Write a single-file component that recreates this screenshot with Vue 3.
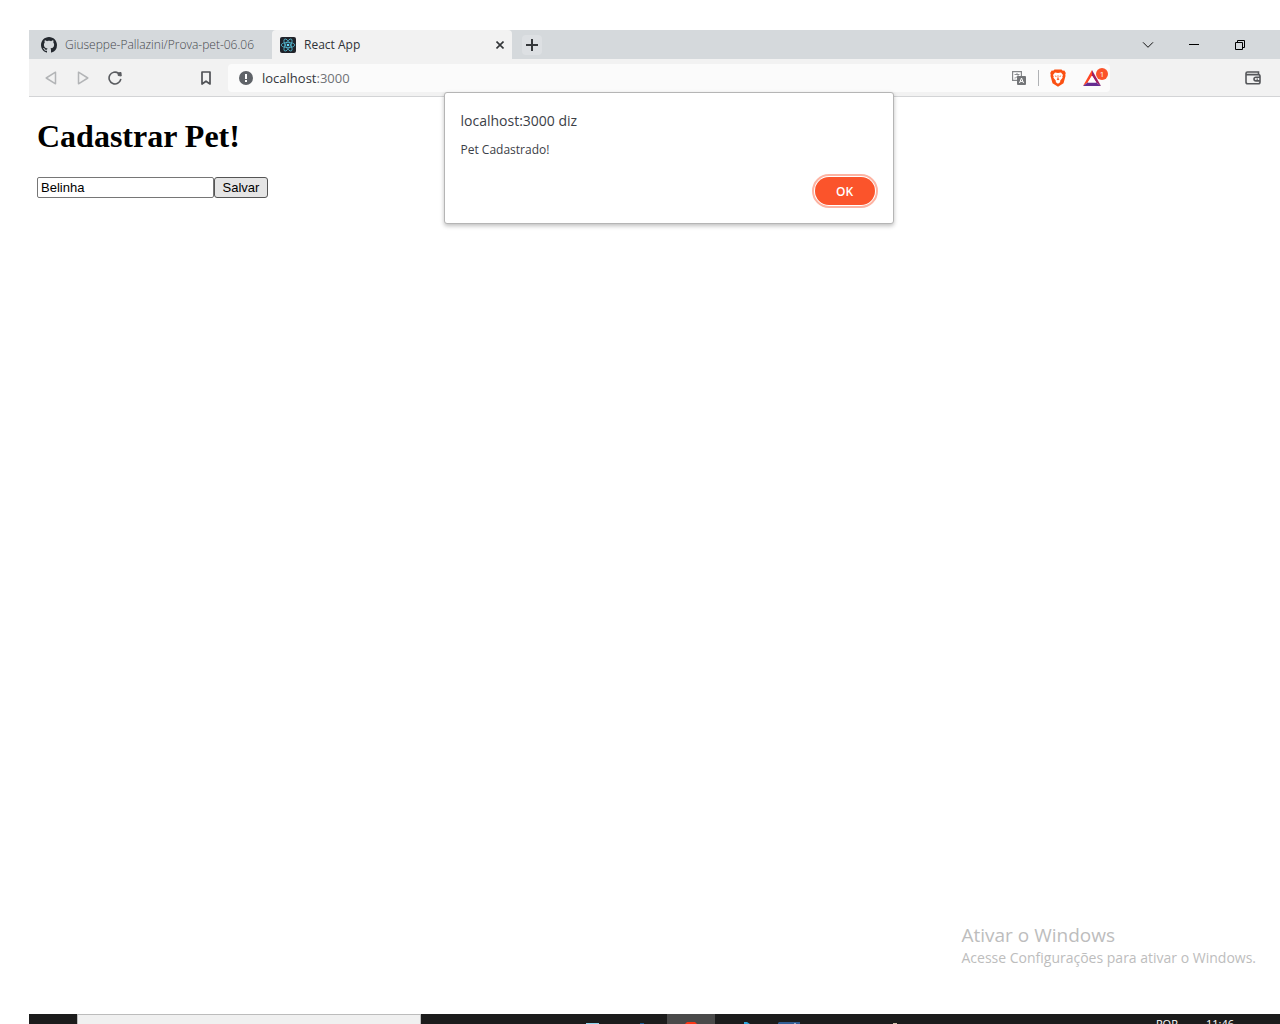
<script setup>
import { ref } from 'vue'

const petName = ref('Belinha')
const address = ref('localhost:3000')
const dialogOpen = ref(true)
</script>

<template>
  <div class="desktop">
    <div class="browser">
      <header class="tabs">
        <div class="tab">
          <svg class="icon" width="16" height="16" viewBox="0 0 16 16" fill="#24292f">
            <path d="M8 0C3.58 0 0 3.58 0 8c0 3.54 2.29 6.53 5.47 7.59.4.07.55-.17.55-.38 0-.19-.01-.82-.01-1.49-2.01.37-2.53-.49-2.69-.94-.09-.23-.48-.94-.82-1.13-.28-.15-.68-.52-.01-.53.63-.01 1.08.58 1.23.82.72 1.21 1.87.87 2.33.66.07-.52.28-.87.51-1.07-1.78-.2-3.64-.89-3.64-3.95 0-.87.31-1.59.82-2.15-.08-.2-.36-1.02.08-2.12 0 0 .67-.21 2.2.82.64-.18 1.32-.27 2-.27s1.36.09 2 .27c1.53-1.04 2.2-.82 2.2-.82.44 1.1.16 1.92.08 2.12.51.56.82 1.27.82 2.15 0 3.07-1.87 3.75-3.65 3.95.29.25.54.73.54 1.48 0 1.07-.01 1.93-.01 2.2 0 .21.15.46.55.38A8.01 8.01 0 0 0 16 8c0-4.42-3.58-8-8-8z" />
          </svg>
          <span>Giuseppe-Pallazini/Prova-pet-06.06</span>
        </div>
        <div class="tab active">
          <svg class="icon" width="16" height="16" viewBox="0 0 16 16">
            <rect width="16" height="16" rx="2" fill="#20232a" />
            <g fill="none" stroke="#53b9d1" stroke-width="0.8">
              <ellipse cx="8" cy="8" rx="6.8" ry="2.6" />
              <ellipse cx="8" cy="8" rx="6.8" ry="2.6" transform="rotate(60 8 8)" />
              <ellipse cx="8" cy="8" rx="6.8" ry="2.6" transform="rotate(120 8 8)" />
            </g>
            <circle cx="8" cy="8" r="1.3" fill="#61dafb" />
          </svg>
          <span class="label">React App</span>
          <button class="close" aria-label="Fechar guia">
            <svg width="8" height="8" viewBox="0 0 8 8" stroke="#333639" stroke-width="1.6"><path d="M0.5 0.5l7 7M7.5 0.5l-7 7" /></svg>
          </button>
        </div>
        <button class="new-tab" aria-label="Nova guia">
          <svg width="12" height="12" viewBox="0 0 12 12" stroke="#35383b" stroke-width="2"><path d="M6 0v12M0 6h12" /></svg>
        </button>
        <div class="window-buttons">
          <button aria-label="Pesquisar guias">
            <svg width="12" height="12" viewBox="0 0 12 12" fill="none" stroke="#111"><path d="M1 3.300l5 5 5-5" /></svg>
          </button>
          <button aria-label="Minimizar">
            <svg width="10" height="12" viewBox="0 0 10 12" stroke="#000"><path d="M0 5.500h10" /></svg>
          </button>
          <button aria-label="Restaurar">
            <svg width="10" height="10" viewBox="0 0 10 10" fill="none" stroke="#000"><path d="M0.500 2.500h7v7h-7zM2.500 2.500v-2h7v7h-2" /></svg>
          </button>
        </div>
      </header>

      <nav class="toolbar">
        <div class="nav-buttons">
          <button aria-label="Voltar">
            <svg width="12" height="14" viewBox="0 0 12 14" fill="none" stroke="#b3b5b7" stroke-width="1.500" stroke-linejoin="round"><path d="M10.500 1.200v11.600L1.200 7z" /></svg>
          </button>
          <button aria-label="Avançar">
            <svg width="12" height="14" viewBox="0 0 12 14" fill="none" stroke="#b3b5b7" stroke-width="1.500" stroke-linejoin="round"><path d="M1.500 1.200v11.600L10.800 7z" /></svg>
          </button>
          <button aria-label="Recarregar">
            <svg width="14" height="14" viewBox="0 0 14 14" fill="none"><path d="M10.500 2.300A5.900 5.900 0 1 0 12.700 8.500" stroke="#5a5c60" stroke-width="1.600" stroke-linecap="round" /><path d="M10 2l3-.6.200 3.600-3-.5z" fill="#5a5c60" stroke="#5a5c60" stroke-linejoin="round" /></svg>
          </button>
        </div>
        <button class="bookmark" aria-label="Favoritos">
          <svg width="10" height="14" viewBox="0 0 10 14" fill="none" stroke="#505256" stroke-width="1.700" stroke-linejoin="round"><path d="M1 1h8v12L5 10.200 1 13z" /></svg>
        </button>
        <div class="address">
          <svg width="14" height="14" viewBox="0 0 14 14"><circle cx="7" cy="7" r="7" fill="#5f6368" /><rect x="6" y="3" width="2" height="5" fill="#fff" /><rect x="6" y="9" width="2" height="2" fill="#fff" /></svg>
          <label class="url">
            <input v-model="address" aria-label="Endereço" />
            <span aria-hidden="true">localhost<i>:3000</i></span>
          </label>
          <button aria-label="Traduzir">
            <svg width="14" height="14" viewBox="0 0 14 14"><path d="M.600.600h8.800v8.800H.600z" fill="#fff" stroke="#85878a" stroke-width="1.200" /><path d="M2.500 3.500h5M5 2v1.500M6.500 3.500C6 5.500 4 7 2.500 7" fill="none" stroke="#85878a" stroke-width=".9" /><rect x="5" y="5" width="9" height="9" rx="1" fill="#737578" /><path d="M7.500 12l2-5 2 5M8.200 10.400h2.600" fill="none" stroke="#fff" /></svg>
          </button>
          <span class="divider"></span>
          <button aria-label="Brave Shields">
            <svg width="16" height="18" viewBox="0 0 16 18"><path d="M4.500.5h7l1.300 1.300 1.500-.2L15.800 4l-.5 1.500.2 1.500-2 7.200L8 17.800 2.500 14.200.5 7l.2-1.500L.2 4l1.500-2.400 1.500.2z" fill="#fb5012" /><path d="M5 3.500l3 .5 3-.5L13 6l-.7 1.600.3 1.100-2.300 2.800-.2 1.700L8 14.800l-2.100-1.600-.2-1.700-2.300-2.800.3-1.100L3 6z" fill="#fff" /><path d="M4.500 6.500l2.200.6-.7.900zM11.500 6.500l-2.200.6.700.9zM7.700 6h.6l.1 3.200 1 1L8 11.200l-1.400-1 1-1z" fill="#fb5012" /></svg>
          </button>
          <button class="rewards" aria-label="Brave Rewards">
            <svg width="18" height="16" viewBox="0 0 18 16"><path d="M9 0v5.500L4.700 12.500 0 16z" fill="#ff4724" /><path d="M9 0l9 16-4.700-3.500L9 5.500z" fill="#9e1f63" /><path d="M0 16l4.700-3.500h8.600L18 16z" fill="#662d91" /><path d="M9 6l4.200 6.500H4.800z" fill="#fff" /></svg>
            <span class="badge">1</span>
          </button>
        </div>
        <button class="wallet" aria-label="Carteira">
          <svg width="16" height="14" viewBox="0 0 16 14" fill="none" stroke="#55575a" stroke-width="1.600"><path d="M13.500 3.600V1H2.500Q1 1 1 2.500v8.500q0 1.800 1.800 1.800h10.400q1.800 0 1.800-1.800V5.400Q15 3.600 13.500 3.600H1.500M15 6.300h-4q-2 0-2 1.800t2 1.800h4" /><path d="M11.500 8.100h1.500" stroke-width="1.200" /></svg>
        </button>
      </nav>

      <main class="page">
        <h1>Cadastrar Pet!</h1>
        <form class="pet-form" @submit.prevent="dialogOpen = true">
          <input v-model="petName" type="text" aria-label="Nome do pet" /><button type="submit">Salvar</button>
        </form>
        <aside class="watermark">
          <p class="big">Ativar o Windows</p>
          <p>Acesse Configurações para ativar o Windows.</p>
        </aside>
      </main>

      <section v-if="dialogOpen" class="dialog" role="alertdialog" aria-labelledby="dialog-title">
        <h2 id="dialog-title">localhost:3000 diz</h2>
        <p>Pet Cadastrado!</p>
        <button @click="dialogOpen = false">OK</button>
      </section>
    </div>

    <footer class="taskbar">
      <div class="search"></div>
      <div class="apps">
        <svg class="app" width="48" height="10" viewBox="0 0 48 10"><path d="M15 9h13v1H15z" fill="#8ed4ee" /></svg>
        <svg class="app" width="48" height="10" viewBox="0 0 48 10"><path d="M21 9h4v1h-4z" fill="#185a92" /></svg>
        <svg class="app current" width="48" height="10" viewBox="0 0 48 10"><path d="M20 8h8l2 2H18z" fill="#fb3514" /></svg>
        <svg class="app" width="48" height="10" viewBox="0 0 48 10"><path d="M29 8h3l3 2h-6z" fill="#2ba5dc" /></svg>
        <svg class="app" width="48" height="10" viewBox="0 0 48 10"><path d="M16 8h21v2H15V9z" fill="#315e94" /><path d="M31 9h2v1h-2z" fill="#91abc9" /></svg>
        <svg class="app" width="48" height="10" viewBox="0 0 48 10" />
        <svg class="app" width="48" height="10" viewBox="0 0 48 10"><path d="M34 9h4v1h-4z" fill="#d1c4ae" /></svg>
      </div>
      <div class="tray"><span>POR</span><time>11:46</time></div>
    </footer>
  </div>
</template>

<style>
body { background: #fff; }
</style>

<style scoped>
* { box-sizing: border-box; }
.desktop {
  display: flex;
  flex-direction: column;
  height: 100vh;
  padding: 30px 0 0 29px;
  overflow: hidden;
  font-family: "Open Sans", "Noto Sans", sans-serif;
}
button { font-family: inherit; }
.browser {
  position: relative;
  display: flex;
  flex: 1;
  flex-direction: column;
}
.tabs {
  display: flex;
  align-items: center;
  height: 29px;
  background: #d5d9dc;
}
.tabs button, .toolbar button {
  display: flex;
  align-items: center;
  justify-content: center;
  padding: 0;
  border: 0;
  background: none;
}
.tab {
  display: flex;
  flex: 0 0 243px;
  align-items: center;
  gap: 8px;
  height: 100%;
  padding-left: 12px;
  color: #45484d;
  font-size: 12px;
  font-weight: 300;
  white-space: nowrap;
}
.tab.active {
  flex-basis: 240px;
  padding: 0 8px;
  border-radius: 4px 4px 0 0;
  background: #f2f2f2;
  color: #303338;
  font-weight: 400;
}
.icon { flex: none; }
.label { flex: 1; }
.new-tab {
  width: 20px;
  height: 20px;
  margin-left: 10px;
  border-radius: 4px;
}
.tabs .new-tab { background: #dde0e3; }
.window-buttons {
  display: flex;
  margin-left: auto;
  padding-right: 17px;
}
.window-buttons button { width: 46px; height: 29px; }
.toolbar {
  display: flex;
  align-items: center;
  height: 38px;
  padding: 0 19px 0 6px;
  border-bottom: 1px solid #d3d4d6;
  background: #f2f2f2;
}
.nav-buttons { display: flex; }
.nav-buttons button { width: 32px; height: 28px; }
.bookmark { width: 20px; height: 28px; margin-left: 65px; }
.toolbar .bookmark { margin-right: 12px; }
.address {
  display: flex;
  flex: 1;
  align-items: center;
  height: 28px;
  padding: 0 2px 0 11px;
  border-radius: 4px;
  background: #fbfbfb;
}
.url {
  display: grid;
  flex: 1;
  align-items: center;
  margin-left: 9px;
  font-size: 13px;
  line-height: 20px;
}
.url input, .url span { grid-area: 1 / 1; }
.url input {
  width: 100%;
  padding: 0;
  border: 0;
  outline: 0;
  background: none;
  color: transparent;
  font: inherit;
}
.url span { color: #34373b; pointer-events: none; }
.url i { color: #6f7276; font-style: normal; }
.divider {
  width: 1px;
  height: 16px;
  margin: 0 11px 0 12px;
  background: #b0b2b5;
}
.toolbar .rewards {
  position: relative;
  width: 25px;
  justify-content: flex-start;
  margin-left: 17px;
}
.badge {
  position: absolute;
  top: -2px;
  right: 0;
  width: 12px;
  height: 12px;
  border-radius: 6px;
  background: #fb542b;
  color: #fff;
  font-size: 8px;
  line-height: 12px;
  text-align: center;
}
.toolbar .wallet { margin-left: 135px; }
.page { flex: 1; padding: 0 8px; }
.page h1 {
  margin: 20px 0 22px;
  font: bold 32px/38px "Liberation Serif", serif;
}
.pet-form { display: flex; }
.pet-form input {
  width: 177px;
  height: 21px;
  padding: 1px 3px;
  border: 1px solid #767676;
  border-radius: 2px;
  font: 13px "Liberation Sans", sans-serif;
}
.pet-form button {
  width: 54px;
  height: 21px;
  padding: 0;
  border: 1px solid #555;
  border-radius: 3px;
  background: #e5e5e5;
  color: #000;
  font: 13px "Liberation Sans", sans-serif;
}
.watermark {
  position: absolute;
  right: 24px;
  bottom: 45px;
  color: #bdbdbd;
  font-size: 14px;
  line-height: 22px;
}
.watermark p { margin: 0; }
.watermark .big { font-size: 19px; line-height: 24px; }
.dialog {
  position: absolute;
  top: 62px;
  left: 50%;
  display: flex;
  flex-direction: column;
  width: 450px;
  margin-left: -211px;
  padding: 18px 18px 18px 16px;
  border: 1px solid #b5b5b5;
  border-radius: 3px;
  background: #fff;
  box-shadow: 0 2px 4px rgb(0 0 0 / 25%);
  color: #3b4047;
}
.dialog h2 { margin: 0; font-size: 14px; font-weight: 400; line-height: 20px; }
.dialog p { margin: 9px 0 17px; font-size: 12px; line-height: 20px; }
.dialog button {
  align-self: flex-end;
  width: 60px;
  height: 28px;
  border: 0;
  border-radius: 14px;
  outline: 2px solid #fdb3a2;
  outline-offset: 1px;
  background: #fb542b;
  color: #fff;
  font-size: 12px;
  font-weight: 600;
}
.taskbar {
  display: flex;
  height: 10px;
  overflow: hidden;
  background: #1c1c1c;
}
.search {
  width: 344px;
  margin-left: 48px;
  border: 1px solid #bcbcbc;
  border-bottom: 0;
  background: #f0f0f0;
}
.apps { display: flex; margin-left: 150px; }
.current { background: #4a4a4a; }
.tray {
  display: flex;
  gap: 28px;
  margin-left: auto;
  padding: 2px 46px 0 0;
  color: #fff;
  font-size: 11px;
  line-height: 16px;
}
</style>
